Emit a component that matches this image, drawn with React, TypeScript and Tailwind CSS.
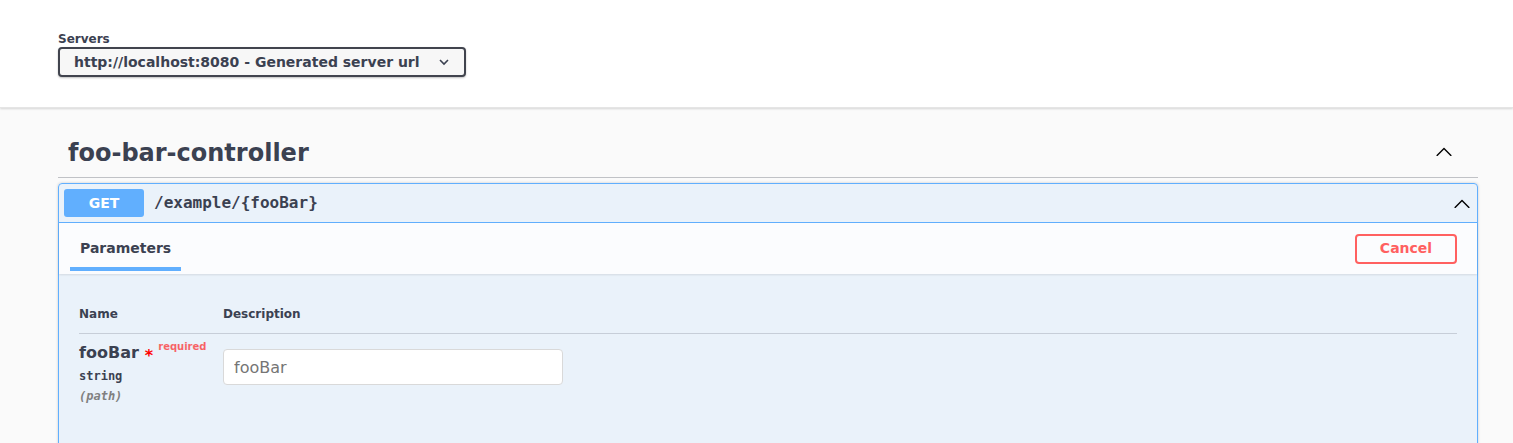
import React from "react";

const ChevronUp = ({ className = "" }: { className?: string }) => (
  <svg className={className} width="20" height="20" viewBox="0 0 20 20" fill="none">
    <path d="M17.418 14.908c-.271.272-.71.272-.982 0L10 8.47l-6.436 6.437c-.27.272-.71.272-.98 0-.27-.27-.27-.708 0-.98l6.926-6.927c.27-.27.71-.27.98 0l6.927 6.928c.272.27.272.708.001.98z" fill="#000" />
  </svg>
);

export default function App() {
  return (
    <div className="min-h-[443px] bg-[#fafafa] text-[#3b4151]" style={{ fontFamily: '"DejaVu Sans", sans-serif' }}>
      {/* servers */}
      <div className="bg-white border-b border-[#e5e5e5] py-[30px] shadow-[0_1px_2px_0_rgba(0,0,0,0.15)]">
        <div className="ml-[58px] w-[1420px]">
          <div className="text-[12px] font-bold leading-[16px] pt-px">Servers</div>
          <div className="flex items-center justify-between w-[408px] h-[30px] border-2 border-[#41444e] rounded-[4px] bg-[#f7f7f7] shadow-[0_1px_2px_0_rgba(0,0,0,0.25)] pl-[14px] pr-[14px]">
            <span className="text-[14px] font-bold">http://localhost:8080 - Generated server url</span>
            <svg width="12" height="8" viewBox="0 0 12 8" fill="none">
              <path d="M2 2l4 4 4-4" stroke="#3b4151" strokeWidth="1.6" />
            </svg>
          </div>
        </div>
      </div>

      <div className="ml-[58px] w-[1420px] pt-[21px]">
        {/* tag header */}
        <div className="flex items-center justify-between border-b border-[rgba(59,65,81,0.3)] pl-[10px] pr-[24px] py-[10px] mb-[5px]">
          <h3 className="text-[24px] font-bold leading-[28px]">foo-bar-controller</h3>
          <span className="flex items-center mb-[5px]"><ChevronUp /></span>
        </div>

        {/* opblock */}
        <div className="border border-[#61affe] rounded-[4px] bg-[#61affe]/10 shadow-[0_0_3px_rgba(0,0,0,0.19)]">
          <div className="flex items-center p-[5px] border-b border-[#61affe]">
            <span className="w-[80px] h-[28px] flex items-center justify-center rounded-[3px] bg-[#61affe] text-white text-[14px] font-bold">GET</span>
            <span className="pl-[10px] text-[16px] font-semibold" style={{ fontFamily: '"DejaVu Sans Mono", monospace' }}>/example/&#123;fooBar&#125;</span>
            <span className="ml-auto flex items-center"><ChevronUp /></span>
          </div>

          <div className="bg-white/80 shadow-[0_1px_2px_rgba(0,0,0,0.1)] h-[51px] pl-[11px] pr-[20px] flex items-center justify-between">
            <div className="self-end">
              <div className="px-[10px] pb-[11px] text-[14px] font-bold leading-[16px]">Parameters</div>
              <div className="h-[4px] bg-[#61affe] mb-[3px]" />
            </div>
            <button className="w-[102px] h-[30px] border-2 border-[#ff6060] rounded-[4px] text-[#ff6060] text-[14px] font-bold bg-transparent">Cancel</button>
          </div>

          <div className="px-[20px] pt-[32px] pb-[60px]">
            <div className="flex text-[12px] font-bold leading-[16px] pb-[11px] border-b border-[rgba(59,65,81,0.2)]">
              <div className="w-[144px]">Name</div>
              <div>Description</div>
            </div>
            <div className="flex pt-[9px]">
              <div className="w-[144px]">
                <div className="flex items-start">
                  <span className="text-[16px] font-bold leading-[19px]">fooBar</span>
                  <span className="text-[#ff0000] text-[16px] font-bold leading-[19px] ml-[6px] mt-[3px]">*</span>
                  <span className="text-[10px] font-bold text-[#ff0000]/60 leading-[12px] ml-[5px] -mt-[2px]">required</span>
                </div>
                <div className="text-[12px] font-semibold leading-[14px] mt-[4px]" style={{ fontFamily: '"DejaVu Sans Mono", monospace' }}>string</div>
                <div className="text-[12px] italic font-semibold text-[#808080] leading-[14px] mt-[6px]" style={{ fontFamily: '"DejaVu Sans Mono", monospace' }}>(path)</div>
              </div>
              <div className="pt-[6px]">
                <input
                  placeholder="fooBar"
                  className="w-[340px] h-[36px] border border-[#d9d9d9] rounded-[4px] bg-white px-[10px] text-[16px] placeholder:text-[#757575] outline-none"
                  style={{ fontFamily: '"DejaVu Sans", sans-serif' }}
                />
              </div>
            </div>
          </div>
        </div>
      </div>
    </div>
  );
}
